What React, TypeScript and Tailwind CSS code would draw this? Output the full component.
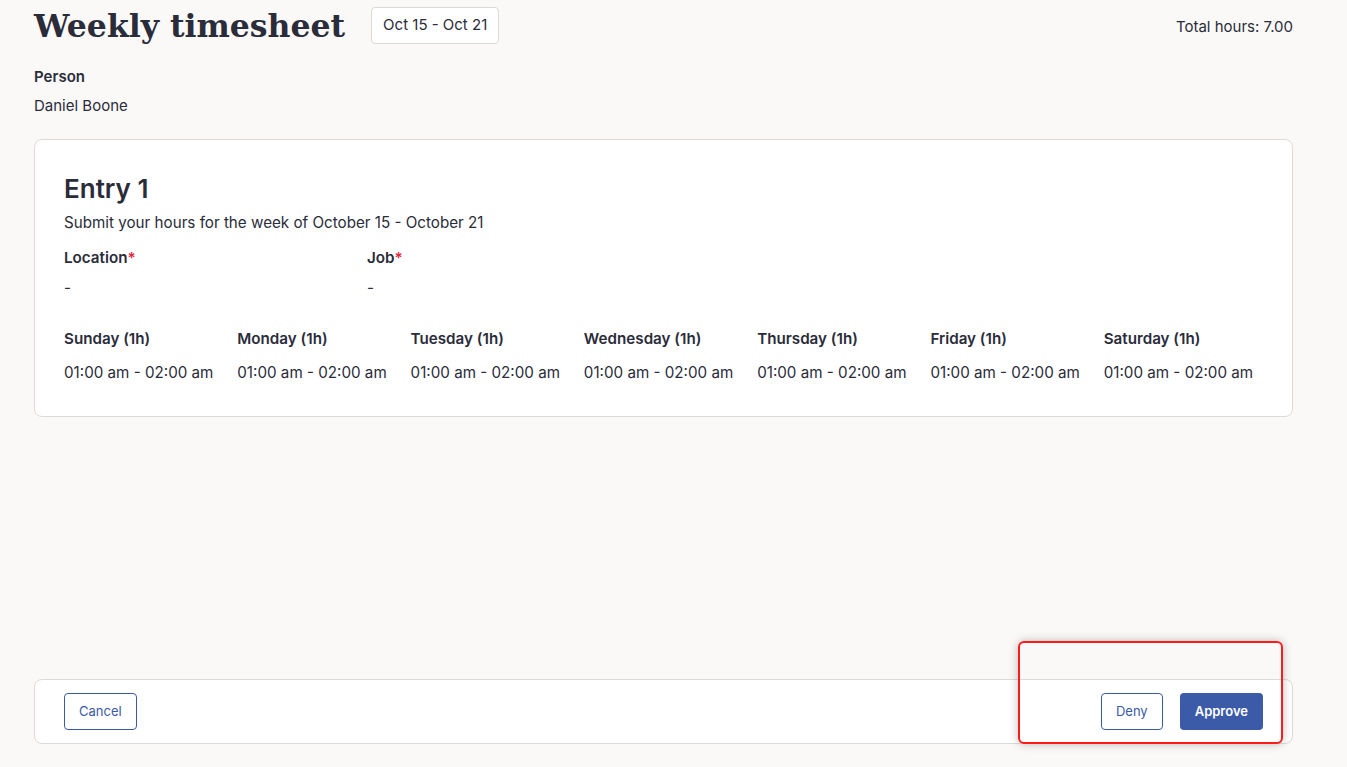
const days = ['Sunday', 'Monday', 'Tuesday', 'Wednesday', 'Thursday', 'Friday', 'Saturday'];

export default function App() {
    return (
        <div
            className="relative h-[767px] bg-[#faf9f8] text-[#2a2c3a] flex flex-col pl-[34px] pr-[54px]"
            style={{ fontFamily: 'Inter, "Liberation Sans", sans-serif' }}
        >
            {/* Header */}
            <div className="flex items-start justify-between pt-[7px]">
                <div className="flex items-center gap-[26px]">
                    <h1
                        className="text-[31.5px] leading-[36px] font-bold text-[#2a2c3a]"
                        style={{ fontFamily: '"DejaVu Serif", serif' }}
                    >
                        Weekly timesheet
                    </h1>
                    <div className="h-[37px] px-[11px] flex items-center bg-white border border-[#dcd9d9] rounded-[4px] text-[15px]">
                        Oct 15 - Oct 21
                    </div>
                </div>
                <div className="text-[15px] pt-[9px]">Total hours: 7.00</div>
            </div>

            <div className="mt-[22px] text-[15px] font-semibold">Person</div>
            <div className="mt-[6px] text-[15px]">Daniel Boone</div>

            {/* Entry card */}
            <div className="mt-[22px] bg-white border border-[#dedada] rounded-[8px] px-[29px] pt-[33px] pb-[31px] text-[15.2px]">
                <h2 className="text-[26px] leading-[32px] font-semibold">Entry 1</h2>
                <p className="mt-[7px]">Submit your hours for the week of October 15 - October 21</p>

                <div className="mt-[12px] flex">
                    <div className="w-[303px]">
                        <div className="font-semibold">
                            Location<span className="text-[#e5253d]">*</span>
                        </div>
                        <div className="mt-[7px]">-</div>
                    </div>
                    <div>
                        <div className="font-semibold">
                            Job<span className="text-[#e5253d]">*</span>
                        </div>
                        <div className="mt-[7px]">-</div>
                    </div>
                </div>

                <div className="mt-[29px] grid grid-cols-7 gap-x-[14px]">
                    {days.map((d) => (
                        <div key={d}>
                            <div className="font-semibold whitespace-nowrap">{d} (1h)</div>
                            <div className="mt-[11px] whitespace-nowrap">01:00 am - 02:00 am</div>
                        </div>
                    ))}
                </div>
            </div>

            {/* Footer actions */}
            <div className="mt-auto mb-[23px] h-[65px] bg-white border border-[#dedada] rounded-[8px] px-[29px] flex items-center justify-between">
                <button className="h-[37px] px-[14px] border border-[#3a5aa8] rounded-[4px] text-[13px] text-[#3a5aa8]">
                    Cancel
                </button>
                <div className="flex items-center gap-[17px]">
                    <button className="h-[37px] px-[14px] border border-[#3a5aa8] rounded-[4px] text-[13px] text-[#3a5aa8]">
                        Deny
                    </button>
                    <button className="h-[37px] px-[15px] bg-[#3b5ba9] rounded-[4px] text-[13px] font-semibold text-white">
                        Approve
                    </button>
                </div>
            </div>

            {/* Annotation highlight */}
            <div className="absolute left-[1018px] top-[641px] w-[265px] h-[103px] border-2 border-[#ff1a1a] rounded-[6px] shadow-[0_0_10px_rgba(0,0,0,0.25)] pointer-events-none" />
        </div>
    );
}
